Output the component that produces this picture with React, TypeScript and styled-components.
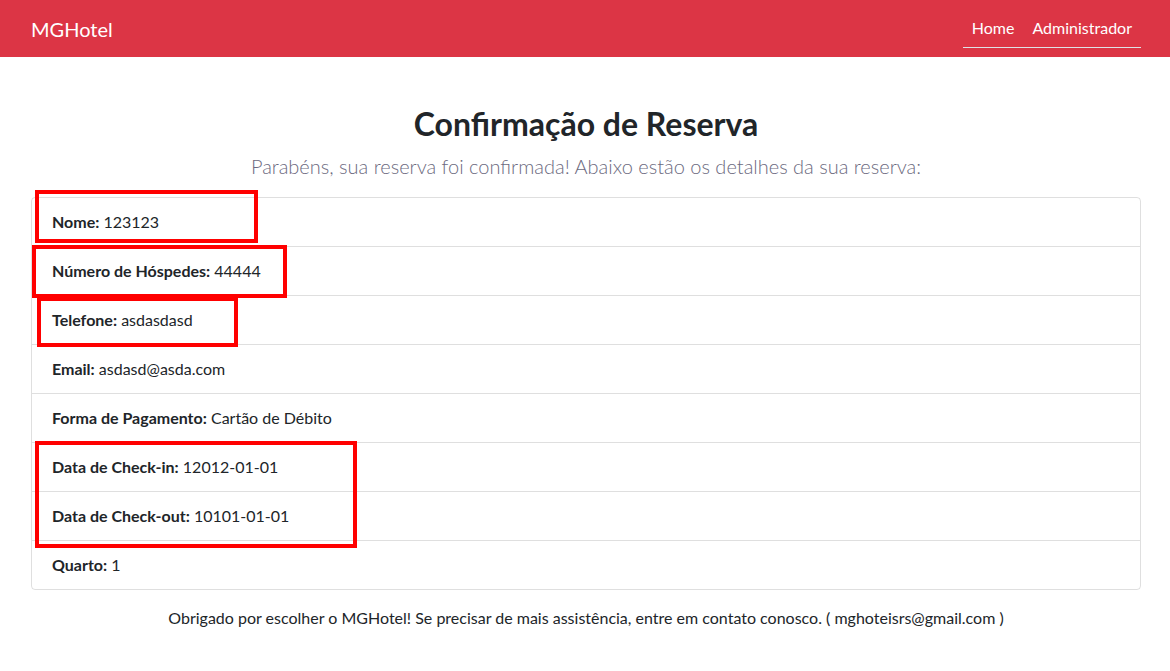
import styled, { createGlobalStyle } from 'styled-components';

const GlobalStyle = createGlobalStyle`
    body {
        margin: 0;
        font-family: 'Segoe UI', Lato, 'Noto Sans', sans-serif;
        font-size: 16px;
        line-height: 1.5;
        color: #212529;
        background: #fff;
    }
`;

const Navbar = styled.nav`
    display: flex;
    align-items: center;
    justify-content: space-between;
    height: 57px;
    padding: 0 29px 0 31px;
    background: #dc3545;
    box-sizing: border-box;
`;

const Brand = styled.a`
    font-size: 20px;
    line-height: 30px;
    color: #fff;
    text-decoration: none;
`;

const NavList = styled.ul`
    display: flex;
    margin: 0;
    padding: 0;
    list-style: none;
    border-bottom: 1px solid #dee2e6;
    align-self: flex-start;
    margin-top: 8px;
`;

const NavLink = styled.a`
    display: block;
    padding: 8px 9px 7px;
    line-height: 24px;
    color: #fff;
    text-decoration: none;
`;

const Main = styled.main`
    position: relative;
    padding: 48px 29px 0 31px;
`;

const Title = styled.h2`
    margin: 0 0 8px;
    font-size: 32px;
    font-weight: 700;
    line-height: 1.2;
    text-align: center;
`;

const Lead = styled.p`
    margin: 0 0 16px;
    font-size: 20px;
    font-weight: 300;
    line-height: 1.5;
    color: #6c6a80;
    text-align: center;
`;

const ListGroup = styled.ul`
    margin: 0;
    padding: 0;
    list-style: none;
    border: 1px solid rgba(0, 0, 0, 0.125);
    border-radius: 4px;
`;

const ListItem = styled.li`
    padding: 12px 20px;
    line-height: 24px;
    & + & {
        border-top: 1px solid rgba(0, 0, 0, 0.125);
    }
`;

const Label = styled.strong`
    font-weight: 700;
`;

const Thanks = styled.p`
    margin: 16px 0 0;
    text-align: center;
`;

// red boxes drawn over the screenshot
const Highlight = styled.div<{ $x: number; $y: number; $w: number; $h: number }>`
    position: absolute;
    left: ${(p) => p.$x}px;
    top: ${(p) => p.$y}px;
    width: ${(p) => p.$w}px;
    height: ${(p) => p.$h}px;
    border: 4px solid #ff0000;
    box-sizing: border-box;
    pointer-events: none;
`;

const details = [
    ['Nome', '123123'],
    ['Número de Hóspedes', '44444'],
    ['Telefone', 'asdasdasd'],
    ['Email', 'asdasd@asda.com'],
    ['Forma de Pagamento', 'Cartão de Débito'],
    ['Data de Check-in', '12012-01-01'],
    ['Data de Check-out', '10101-01-01'],
    ['Quarto', '1']
];

// positions relative to main (which starts at y = 57)
const boxes = [
    { x: 35, y: 133, w: 223, h: 53 },
    { x: 32, y: 188, w: 255, h: 53 },
    { x: 37, y: 240, w: 201, h: 50 },
    { x: 35, y: 384, w: 322, h: 107 }
];

const App = () => (
    <>
        <GlobalStyle />
        <Navbar>
            <Brand href="#">MGHotel</Brand>
            <NavList>
                <li>
                    <NavLink href="#">Home</NavLink>
                </li>
                <li>
                    <NavLink href="#">Administrador</NavLink>
                </li>
            </NavList>
        </Navbar>
        <Main>
            <Title>Confirmação de Reserva</Title>
            <Lead>Parabéns, sua reserva foi confirmada! Abaixo estão os detalhes da sua reserva:</Lead>
            <ListGroup>
                {details.map(([label, value]) => (
                    <ListItem key={label}>
                        <Label>{label}:</Label> {value}
                    </ListItem>
                ))}
            </ListGroup>
            <Thanks>
                Obrigado por escolher o MGHotel! Se precisar de mais assistência, entre em contato conosco. (
                mghoteisrs@gmail.com )
            </Thanks>
            {boxes.map((b, i) => (
                <Highlight key={i} $x={b.x} $y={b.y} $w={b.w} $h={b.h} />
            ))}
        </Main>
    </>
);

export default App;
